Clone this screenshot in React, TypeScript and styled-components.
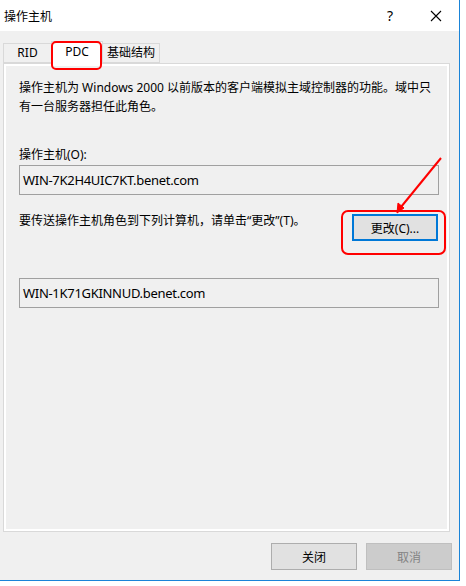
import React from "react";
import styled, { createGlobalStyle } from "styled-components";

const Global = createGlobalStyle`
  html, body { margin: 0; padding: 0; background: #ffffff; }
  body { font-family: "Noto Sans", "Noto Sans CJK SC", sans-serif; font-size: 12px; color: #000; }
`;

const FONT = `"Noto Sans", "Noto Sans CJK SC", sans-serif`;

const Window = styled.div`
  position: relative;
  width: 459px;
  height: 580px;
  border-right: 1px solid #1a84d8;
  border-bottom: 1px solid #1a84d8;
  background: #f0f0f0;
  display: flex;
  flex-direction: column;
  font-family: ${FONT};
`;

const TitleBar = styled.div`
  height: 31px;
  background: #ffffff;
  display: flex;
  align-items: center;
  padding-left: 4px;
  flex-shrink: 0;
`;

const Title = styled.div`
  flex: 1;
  font-size: 12px;
  line-height: 16px;
  font-family: "Noto Sans CJK SC", sans-serif;
`;

const TitleButton = styled.div`
  width: 46px;
  height: 31px;
  display: flex;
  align-items: center;
  justify-content: center;
  font-size: 14px;
  font-family: "Noto Sans", sans-serif;
`;

const Body = styled.div`
  flex: 1;
  display: flex;
  flex-direction: column;
  padding: 10px 7px 0 3px;
`;

const TabStrip = styled.div`
  display: flex;
  align-items: flex-end;
  height: 22px;
  position: relative;
  z-index: 1;
`;

const Tab = styled.div<{ $w: number; $active?: boolean }>`
  width: ${(p) => p.$w}px;
  box-sizing: border-box;
  height: ${(p) => (p.$active ? 23 : 20)}px;
  margin-bottom: ${(p) => (p.$active ? -1 : 0)}px;
  margin-left: -1px;
  border: 1px solid #d9d9d9;
  border-bottom: ${(p) => (p.$active ? "none" : "1px solid #d9d9d9")};
  background: ${(p) => (p.$active ? "#ffffff" : "#f0f0f0")};
  display: flex;
  justify-content: center;
  align-items: ${(p) => (p.$active ? "flex-start" : "center")};
  padding-top: ${(p) => (p.$active ? 2 : 0)}px;
  font-size: 12px;
  line-height: 16px;
  font-family: "Noto Sans", "Noto Sans CJK SC", sans-serif;
  &:first-child { margin-left: 0; }
`;

const Panel = styled.div`
  width: 447px;
  height: 469px;
  box-sizing: border-box;
  border: 1px solid #d9d9d9;
  box-shadow: inset 0 0 0 2px #ffffff;
  padding: 14px 10px 0 15px;
  display: flex;
  flex-direction: column;
`;

const Text = styled.div`
  font-size: 12px;
  line-height: 19px;
  font-family: "Noto Sans", "Noto Sans CJK SC", sans-serif;
  color: #000;
`;

const Desc = styled(Text)`
  width: 420px;
`;

const Label = styled(Text)`
  margin-top: 29px;
`;

const Field = styled.div<{ $mt: number }>`
  margin-top: ${(p) => p.$mt}px;
  height: 30px;
  box-sizing: border-box;
  border: 1px solid #a0a0a0;
  background: #f0f0f0;
  display: flex;
  align-items: center;
  padding-left: 3px;
  font-size: 13px;
  letter-spacing: -0.3px;
  font-family: "Noto Sans", sans-serif;
  color: #000;
`;

const Row = styled.div`
  margin-top: 16px;
  display: flex;
  justify-content: space-between;
  align-items: flex-start;
`;

const Button = styled.button<{ $focus?: boolean; $disabled?: boolean }>`
  width: 86px;
  height: 27px;
  box-sizing: border-box;
  border: ${(p) => (p.$focus ? "2px solid #0078d7" : p.$disabled ? "1px solid #bfbfbf" : "1px solid #adadad")};
  background: ${(p) => (p.$disabled ? "#cccccc" : "#e1e1e1")};
  color: ${(p) => (p.$disabled ? "#838383" : "#000")};
  font-size: 12px;
  font-family: "Noto Sans", "Noto Sans CJK SC", sans-serif;
  padding: 0;
  display: flex;
  align-items: center;
  justify-content: center;
`;

const ChangeButton = styled(Button)`
  margin-top: 3px;
  margin-right: 1px;
`;

const SecondField = styled(Field)``;

const Footer = styled.div`
  margin-top: 11px;
  display: flex;
  justify-content: flex-end;
  gap: 9px;
`;

const Overlay = styled.svg`
  position: absolute;
  left: 0;
  top: 0;
  pointer-events: none;
  z-index: 5;
`;

export default function App() {
  return (
    <>
      <Global />
      <Window>
        <TitleBar>
          <Title>操作主机</Title>
          <TitleButton>?</TitleButton>
          <TitleButton>
            <svg width="12" height="12" viewBox="0 0 12 12">
              <path d="M1 1 L11 11 M11 1 L1 11" stroke="#000" strokeWidth="1.1" />
            </svg>
          </TitleButton>
        </TitleBar>
        <Body>
          <TabStrip>
            <Tab $w={49}>RID</Tab>
            <Tab $w={52} $active>PDC</Tab>
            <Tab $w={58}>基础结构</Tab>
          </TabStrip>
          <Panel>
            <Desc>
              操作主机为 Windows 2000 以前版本的客户端模拟主域控制器的功能。域中只有一台服务器担任此角色。
            </Desc>
            <Label>操作主机(O):</Label>
            <Field $mt={1}>WIN-7K2H4UIC7KT.benet.com</Field>
            <Row>
              <Text>要传送操作主机角色到下列计算机，请单击“更改”(T)。</Text>
              <ChangeButton $focus>更改(C)...</ChangeButton>
            </Row>
            <SecondField $mt={37}>WIN-1K71GKINNUD.benet.com</SecondField>
          </Panel>
          <Footer>
            <Button>关闭</Button>
            <Button $disabled>取消</Button>
          </Footer>
        </Body>
        <Overlay width="460" height="581" viewBox="0 0 460 581">
          <rect x="52" y="42" width="49" height="27" rx="4" fill="none" stroke="#ff0000" strokeWidth="2" />
          <rect x="342" y="211" width="103" height="43" rx="6" fill="none" stroke="#ff0000" strokeWidth="2" />
          <path d="M441 158 L401 207" stroke="#ff0000" strokeWidth="2" fill="none" />
          <path d="M397 213 L398 203 L404 208 Z" fill="#ff0000" stroke="#ff0000" strokeWidth="1" />
        </Overlay>
      </Window>
    </>
  );
}
